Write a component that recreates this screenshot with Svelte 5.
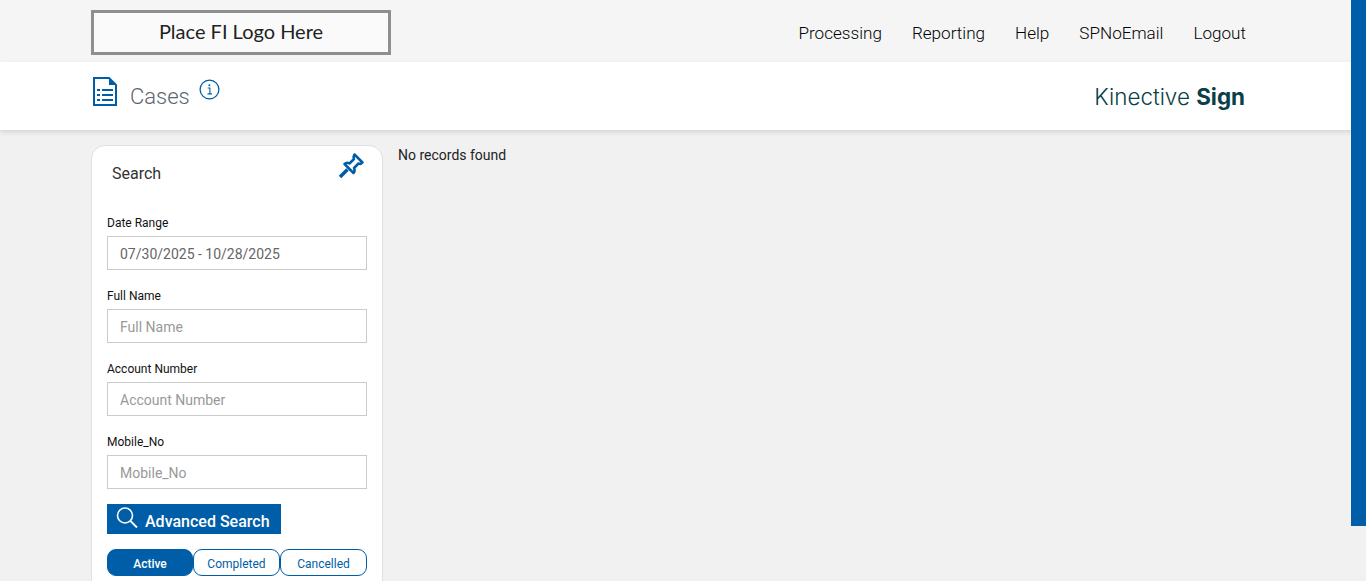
<script>
    const fields = [
        { label: "Date Range", placeholder: "Date Range", value: "07/30/2025 - 10/28/2025" },
        { label: "Full Name", placeholder: "Full Name", value: "" },
        { label: "Account Number", placeholder: "Account Number", value: "" },
        { label: "Mobile_No", placeholder: "Mobile_No", value: "" }
    ];
    const navItems = ["Processing", "Reporting", "Help", "SPNoEmail", "Logout"];
    const tabs = ["Active", "Completed", "Cancelled"];
    let activeTab = $state("Active");
</script>

<div class="page">
    <header class="topbar">
        <div class="logo">Place FI Logo Here</div>
        <nav class="nav">
            {#each navItems as item}
                <a href="#top">{item}</a>
            {/each}
        </nav>
    </header>

    <div class="subbar">
        <div class="title">
            <svg class="doc" width="24" height="29" viewBox="0 0 24 29" fill="none">
                <path d="M1 1H16L23 8V28H1Z" stroke="#005ea8" stroke-width="2" />
                <path d="M16 1V8H23" fill="#005ea8" />
                <path d="M9 13H20M9 18H20M9 23H20M4 13H7M4 18H7M4 23H7" stroke="#005ea8" stroke-width="2" />
            </svg>
            <span class="cases">Cases</span>
            <svg class="info" width="21" height="21" viewBox="0 0 21 21" fill="none">
                <circle cx="10.5" cy="10.5" r="9.4" stroke="#005ea8" stroke-width="1.3" />
                <path d="M8.7 9H10.9V14.7M8.5 14.9H13" stroke="#005ea8" stroke-width="1.1" />
                <circle cx="10.4" cy="6.3" r="1" fill="#005ea8" />
            </svg>
        </div>
        <div class="brand">Kinective <b>Sign</b></div>
    </div>

    <main class="content">
        <aside class="card">
            <div class="card-head">
                <h2>Search</h2>
                <svg class="pin" width="28" height="28" viewBox="0 0 28 28" fill="none">
                    <path d="M17.5 2.5L25.5 10.5L23.5 12L21.5 11.5L17 16C18 18 17.5 20 16.5 21L7.5 12C9 10.5 11 10.5 12.5 11.5L17 7L16.5 5Z" stroke="#005ea8" stroke-width="2.5" stroke-linejoin="round" />
                    <path d="M10.5 17.5L3 25" stroke="#005ea8" stroke-width="3.6" />
                </svg>
            </div>

            {#each fields as field}
                <label class="field">
                    <span>{field.label}</span>
                    <input type="text" placeholder={field.placeholder} value={field.value} />
                </label>
            {/each}

            <button class="advanced" type="button">
                <svg width="24" height="24" viewBox="0 0 24 24" fill="none">
                    <circle cx="10" cy="9.5" r="7.5" stroke="#fff" stroke-width="1.6" />
                    <path d="M15.5 15L22 21.5" stroke="#fff" stroke-width="1.8" />
                </svg>
                <span>Advanced Search</span>
            </button>

            <div class="tabs">
                {#each tabs as tab}
                    <button type="button" class:on={activeTab === tab} onclick={() => (activeTab = tab)}>{tab}</button>
                {/each}
            </div>
        </aside>

        <p class="empty">No records found</p>
    </main>

    <div class="sidebar"></div>
</div>

<style>
    :global(html), :global(body) {
        margin: 0;
        height: 100%;
        overflow: hidden;
    }
    .page {
        height: 581px;
        overflow: hidden;
        position: relative;
        background: #f1f1f1;
        font-family: Roboto, "Liberation Sans", sans-serif;
    }
    .topbar {
        height: 62px;
        box-sizing: border-box;
        background: #f5f5f5;
        display: flex;
        align-items: center;
        justify-content: space-between;
        padding: 0 120px 0 91px;
    }
    .logo {
        width: 300px;
        height: 45px;
        box-sizing: border-box;
        border: 3px solid #8f8f8f;
        background: #fafafa;
        margin-top: 3px;
        padding-bottom: 3px;
        display: flex;
        align-items: center;
        justify-content: center;
        font-family: Lato, sans-serif;
        font-size: 20px;
        color: #222;
    }
    .nav {
        display: flex;
        gap: 30px;
        margin-top: 4px;
    }
    .nav a {
        font-size: 17.1px;
        font-weight: 300;
        color: #000;
        text-decoration: none;
    }
    .subbar {
        height: 68px;
        box-sizing: border-box;
        background: #fff;
        box-shadow: 0 2px 5px rgba(0, 0, 0, 0.12);
        display: flex;
        justify-content: space-between;
        padding: 0 120px 0 93px;
        position: relative;
    }
    .title {
        display: flex;
        align-items: flex-start;
    }
    .doc {
        margin-top: 15px;
    }
    .cases {
        margin: 22px 0 0 13px;
        font-size: 22px;
        font-weight: 300;
        color: #5c6670;
    }
    .info {
        margin: 17px 0 0 9px;
    }
    .brand {
        margin: 21px 1px 0 0;
        font-family: Inter, sans-serif;
        font-size: 22.4px;
        font-weight: 300;
        color: #0a3f47;
    }
    .brand b {
        font-weight: 700;
    }
    .content {
        display: flex;
        gap: 15px;
        padding: 15px 0 0 91px;
    }
    .card {
        width: 292px;
        height: 480px;
        flex: none;
        box-sizing: border-box;
        background: #fff;
        border: 1px solid #e0e0e0;
        border-radius: 14px;
        padding: 0 15px;
    }
    .card-head {
        height: 67px;
        display: flex;
        justify-content: space-between;
        align-items: flex-start;
    }
    h2 {
        margin: 18px 0 0 5px;
        font-size: 16px;
        font-weight: 400;
        color: #333;
    }
    .pin {
        margin: 6px 2px 0 0;
    }
    .field {
        display: block;
        height: 73px;
        box-sizing: border-box;
        padding-top: 3px;
    }
    .field span {
        display: block;
        font-size: 12px;
        line-height: 14px;
        color: #111;
        margin-bottom: 6px;
    }
    input {
        display: block;
        width: 260px;
        height: 34px;
        box-sizing: border-box;
        border: 1.5px solid #cbcbcb;
        padding: 2px 12px 0;
        font-family: inherit;
        font-size: 14px;
        color: #666;
        outline: none;
        border-radius: 0;
    }
    input::placeholder {
        color: #999;
    }
    .advanced {
        margin-top: -1px;
        display: flex;
        align-items: center;
        gap: 6px;
        width: 174px;
        height: 30px;
        box-sizing: border-box;
        padding: 0 0 0 8px;
        background: #005ea8;
        border: none;
        color: #fff;
        font-family: inherit;
        font-size: 16px;
        font-weight: 500;
    }
    .advanced svg {
        margin-top: -3px;
    }
    .advanced span {
        margin-top: 5px;
    }
    .tabs {
        display: grid;
        grid-template-columns: 86px 87px 87px;
        margin-top: 15px;
    }
    .tabs button {
        height: 27px;
        box-sizing: border-box;
        padding: 2px 0 0;
        background: #fff;
        border: 1px solid #005ea8;
        border-radius: 9px;
        color: #005ea8;
        font-family: inherit;
        font-size: 12px;
    }
    .tabs button.on {
        background: #005ea8;
        color: #fff;
        font-weight: 500;
    }
    .empty {
        margin: 2px 0 0;
        font-size: 14px;
        line-height: 16px;
        color: #222;
    }
    .sidebar {
        position: absolute;
        top: 0;
        right: 0;
        width: 15px;
        height: 526px;
        background: #005ea8;
    }
</style>
